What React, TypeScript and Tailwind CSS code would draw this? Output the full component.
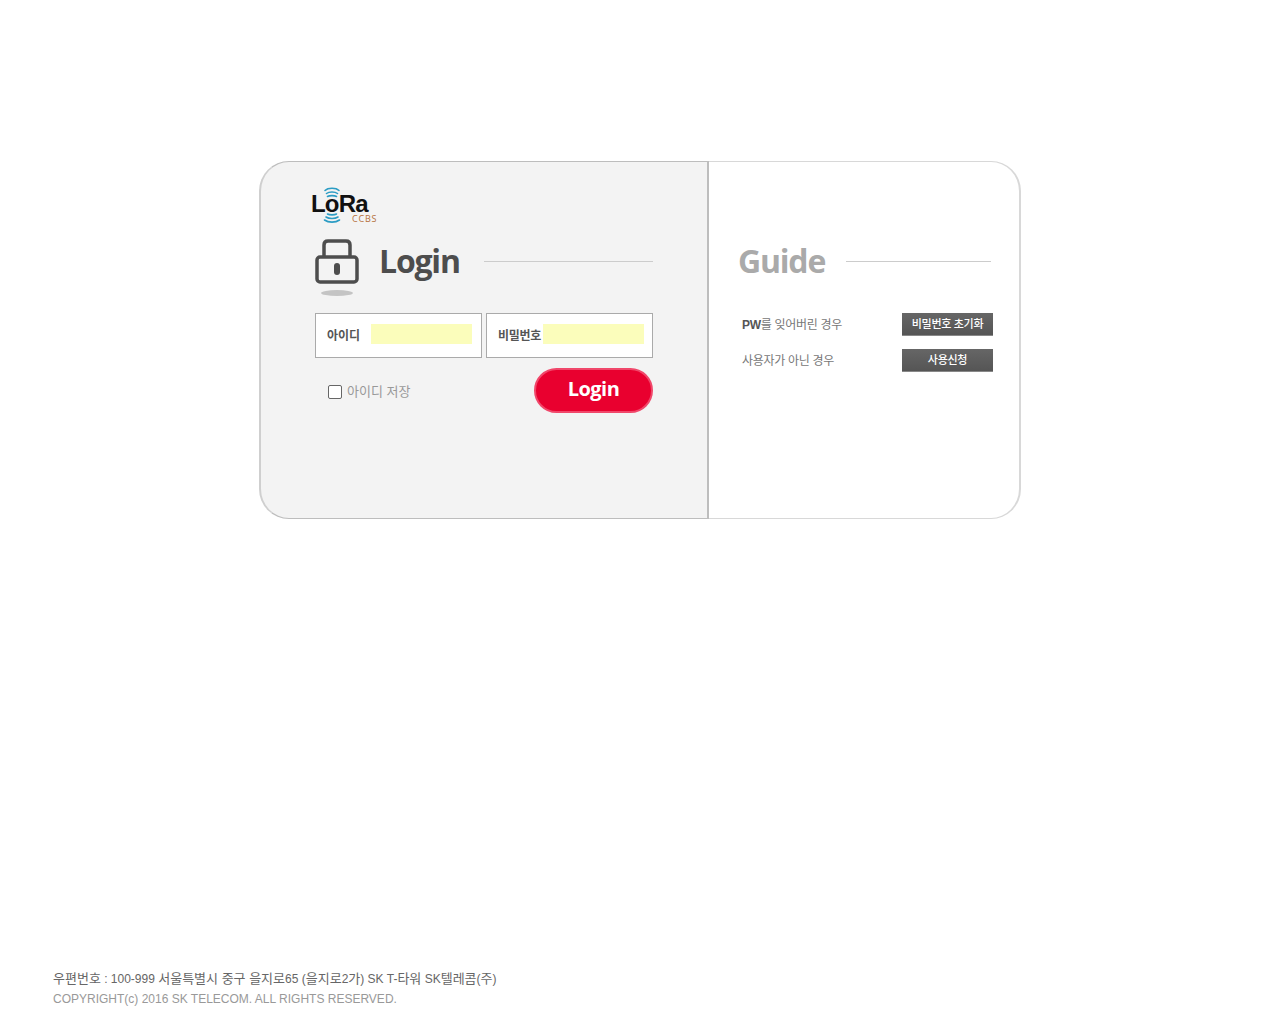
const kr = "font-['Liberation_Sans','Noto_Sans_CJK_KR',sans-serif]";
const title = "font-['Open_Sans',sans-serif] font-bold tracking-[-1.2px]";

function LoraLogo() {
  return (
    <div className="relative h-[38px] w-[68px]">
      <svg className="absolute left-0 top-0" width="68" height="38" viewBox="0 0 68 38" fill="none">
        <g stroke="#2b9cc4" strokeWidth="1.6" strokeLinecap="round">
          <path d="M13 4.500c3-3 11-3 14 0" />
          <path d="M14.500 7.500c2.500-2 8.500-2 11 0" />
          <path d="M15.500 10.500c2-1.200 7-1.200 9 0" />
          <path d="M15.500 28c2 1.200 7 1.200 9 0" />
          <path d="M14 31c3 2 9 2 12 0" />
          <path d="M12.500 34c4 2.800 11 2.800 15 0" />
        </g>
      </svg>
      <span className="absolute left-[-1px] top-[8px] font-['Liberation_Sans',sans-serif] text-[24px] font-bold leading-[20px] tracking-[-0.8px] text-[#111]">
        LoRa
      </span>
      <span className="absolute left-[40px] top-[28px] font-['Open_Sans',sans-serif] text-[9px] leading-[10px] tracking-[0.8px] text-[#b5703a]">
        CCBS
      </span>
    </div>
  );
}

function LockIcon() {
  return (
    <div className="flex w-[44px] flex-col items-center">
      <svg width="44" height="46" viewBox="0 0 44 46" fill="none">
        <path d="M9 18V6C9 3.500 10.500 2 13 2h18C33.500 2 35 3.500 35 6V18" stroke="#4d4d4d" strokeWidth="3.500" />
        <rect x="2" y="18" width="40" height="25" rx="3" stroke="#4d4d4d" strokeWidth="3.500" />
        <rect x="19" y="24" width="6" height="12" rx="3" fill="#4d4d4d" />
      </svg>
      <div className="mt-[5px] h-[6px] w-[32px] rounded-[50%] bg-[#c4c4c4]" />
    </div>
  );
}

function Field({ label, inputClass, labelClass }: { label: string; inputClass: string; labelClass: string }) {
  return (
    <div className="flex h-[45px] w-[168px] items-center border border-[#aaaaaa] bg-white pl-[11px]">
      <span className={`${labelClass} text-[12px] font-bold text-[#555]`}>{label}</span>
      <div className={`${inputClass} mb-[3px] h-[20px] bg-[#fbfdbb]`} />
    </div>
  );
}

function GuideRow({ text, bold, button }: { text: string; bold?: string; button: string }) {
  return (
    <div className="flex h-[23px] items-center justify-between">
      <span className={`${kr} text-[12px] tracking-[-0.3px] text-[#777]`}>
        {bold && <b className="text-[#555]">{bold}</b>}
        {text}
      </span>
      <button className={`${kr} h-[23px] w-[91px] border-b border-[#888] bg-gradient-to-b from-[#666] to-[#555] text-[11px] font-medium tracking-[-0.3px] text-white`}>
        {button}
      </button>
    </div>
  );
}

function Ko({ children }: { children: string }) {
  return <span className="text-[13px]">{children}</span>;
}

export default function App() {
  return (
    <div className="flex min-h-[1024px] flex-col bg-white pt-[161px]">
      <div className="mx-auto flex h-[358px] w-[762px]">
        <div className="w-[450px] rounded-l-[30px] border-y border-l-2 border-r-2 border-[#bdbdbd] border-l-[#cfcfcf] bg-[#f3f3f3] pl-[51px] pt-[24px]">
          <LoraLogo />
          <div className="mt-[15px] flex pl-[3px]">
            <LockIcon />
            <div className="flex h-[44px] items-center">
              <span className={`${title} ml-[20px] w-[84px] text-[32px] leading-[42px] text-[#4d4d4d]`}>Login</span>
              <div className="ml-[21px] h-px w-[169px] bg-[#cccccc]" />
            </div>
          </div>
          <div className="ml-[3px] mt-[17px] flex w-[338px] gap-[4px]">
            <Field label="아이디" labelClass={`${kr} w-[44px]`} inputClass="w-[101px]" />
            <Field label="비밀번호" labelClass={`${kr} w-[45px] tracking-[-0.3px]`} inputClass="w-[101px]" />
          </div>
          <div className="ml-[3px] mt-[10px] flex w-[338px] items-center justify-between">
            <label className="ml-[13px] mt-[2px] flex items-center gap-[5px]">
              <span className="h-[14px] w-[14px] rounded-[2px] border border-[#666] bg-white" />
              <span className={`${kr} text-[13px] text-[#999]`}>아이디 저장</span>
            </label>
            <button className="h-[45px] w-[119px] rounded-full border-2 border-[#f0476a] bg-[#e9002f] pb-[4px] font-['Open_Sans',sans-serif] text-[20px] font-bold leading-[36px] tracking-[-0.5px] text-white">
              Login
            </button>
          </div>
        </div>
        <div className="flex-1 rounded-r-[30px] border-y border-r-2 border-[#d8d8d8] bg-white pl-[30px] pr-[26px] pt-[76px]">
          <div className="flex h-[46px] items-center">
            <span className={`${title} ml-[-1px] w-[90px] text-[32px] leading-[44px] text-[#aaaaaa]`}>Guide</span>
            <div className="ml-[18px] h-px w-[145px] bg-[#cccccc]" />
          </div>
          <div className="mt-[29px] flex flex-col gap-[13px] pl-[3px]">
            <GuideRow bold="PW" text="를 잊어버린 경우" button="비밀번호 초기화" />
            <GuideRow text="사용자가 아닌 경우" button="사용신청" />
          </div>
        </div>
      </div>
      <footer className={`${kr} mt-auto pb-[15px] pl-[53px] text-[12px] leading-[20px]`}>
        <p className="text-[#666]">
          <Ko>우편번호</Ko> : 100-999 <Ko>서울특별시 중구 을지로</Ko>65 (<Ko>을지로</Ko>2<Ko>가</Ko>) SK T-<Ko>타워</Ko> SK<Ko>텔레콤</Ko>(<Ko>주</Ko>)
        </p>
        <p className="text-[#999]">COPYRIGHT(c) 2016 SK TELECOM. ALL RIGHTS RESERVED.</p>
      </footer>
    </div>
  );
}
